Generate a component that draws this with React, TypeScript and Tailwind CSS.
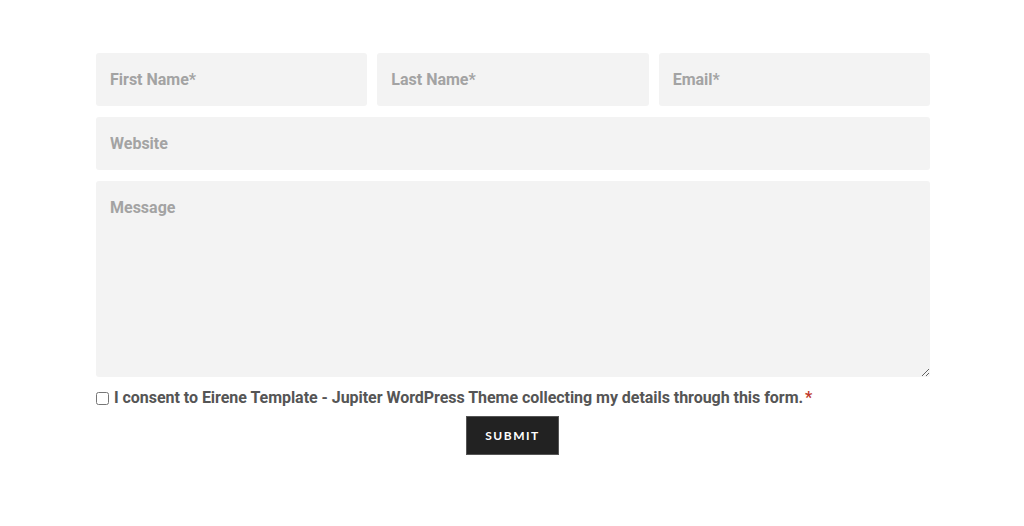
import { useState } from "react";

const fieldClass =
  "w-full h-[53px] rounded-[3px] bg-[#f3f3f3] px-[14px] text-[16px] font-bold text-[#555] placeholder:text-[#a3a3a3] outline-none";

export default function App() {
  const [agree, setAgree] = useState(false);

  return (
    <div className="min-h-screen bg-white font-['Roboto',sans-serif]">
      <form className="mx-auto w-[836px] pl-[2px] pt-[53px] flex flex-col" onSubmit={(e) => e.preventDefault()}>
        <div className="grid grid-cols-3 gap-[10px]">
          <input className={fieldClass} placeholder="First Name*" />
          <input className={fieldClass} placeholder="Last Name*" />
          <input className={fieldClass} placeholder="Email*" />
        </div>
        <input className={`${fieldClass} mt-[11px] h-[52px]`} placeholder="Website" />
        <textarea
          className="mt-[11px] h-[196px] w-full rounded-[3px] bg-[#f3f3f3] px-[14px] pt-[15px] text-[16px] font-bold text-[#555] placeholder:text-[#a3a3a3] outline-none resize-y"
          placeholder="Message"
        />
        <label className="mt-[11px] flex items-center gap-[5px] text-[16px] font-bold text-[#555] leading-[20px] tracking-[-0.04px]">
          <input
            type="checkbox"
            checked={agree}
            onChange={(e) => setAgree(e.target.checked)}
            className="m-0 h-[13px] w-[13px]"
          />
          <span>
            I consent to Eirene Template - Jupiter WordPress Theme collecting my details through this form.
            <span className="ml-[2px] text-[#c0392b]">*</span>
          </span>
        </label>
        <div className="mt-[8px] flex justify-center pr-[1px]">
          <button
            type="submit"
            className="h-[39px] w-[93px] bg-[#222] text-white text-[12px] font-bold tracking-[1.5px] font-['Lato',sans-serif] border border-[#555]"
          >
            SUBMIT
          </button>
        </div>
      </form>
    </div>
  );
}
